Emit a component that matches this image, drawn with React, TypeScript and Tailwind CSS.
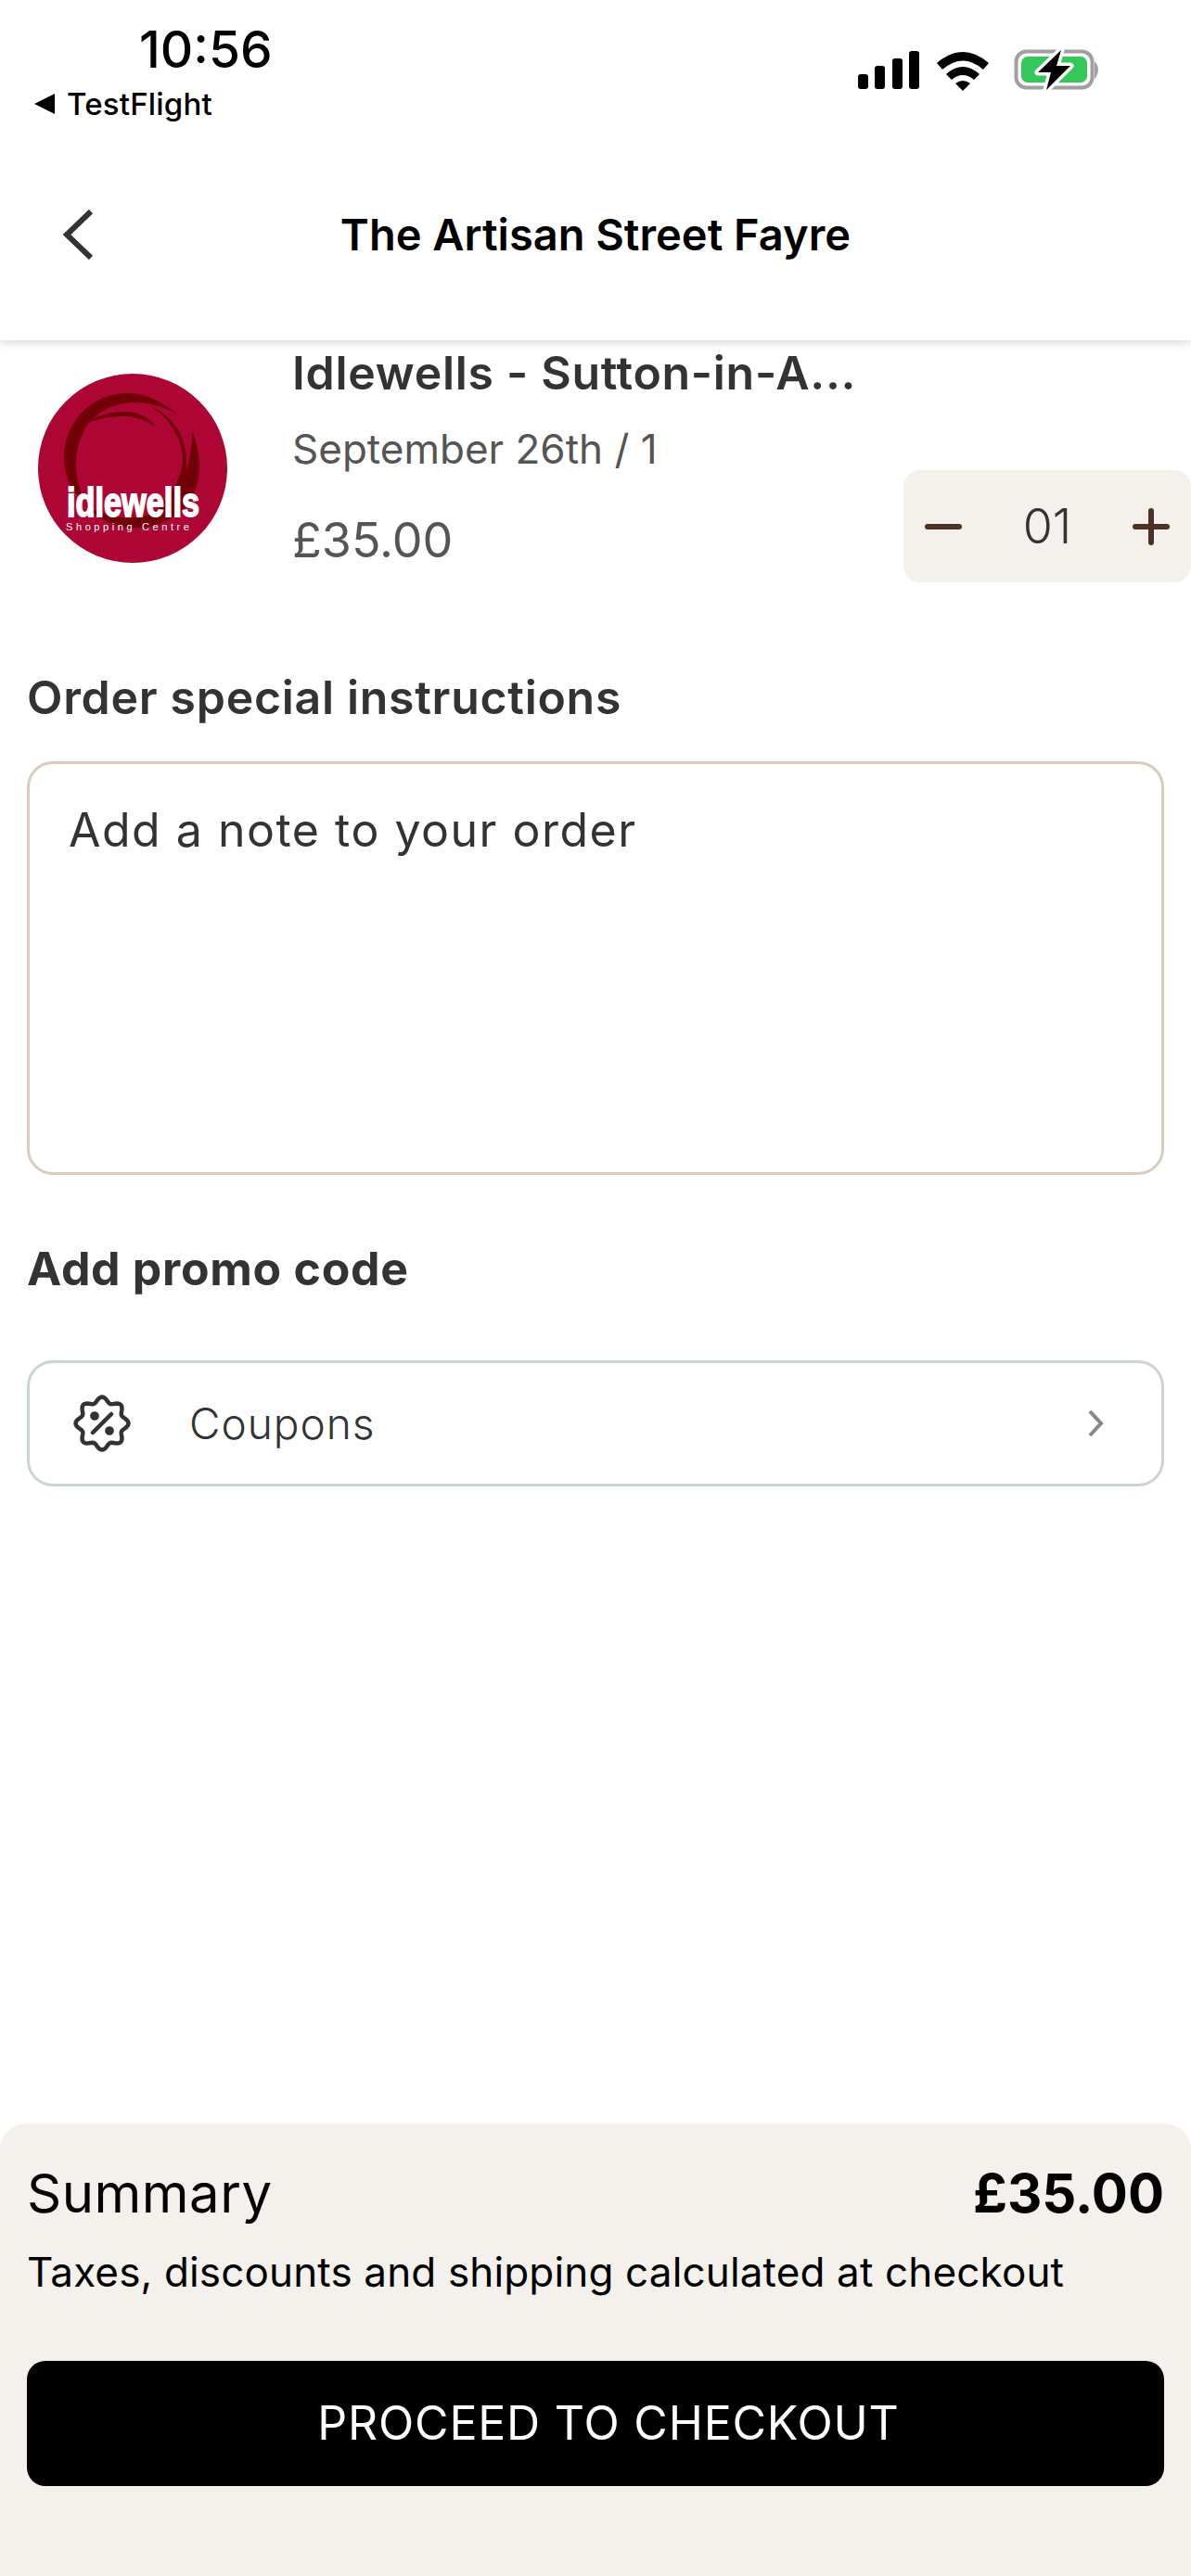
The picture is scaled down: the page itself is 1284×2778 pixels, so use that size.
const inter = { fontFamily: "Inter, 'Liberation Sans', sans-serif" };

// wavy 8 lobe badge outline
const badgePath =
  Array.from({ length: 96 }, (_, i) => {
    const a = (i * 2 * Math.PI) / 96;
    const r = 25.6 + 2.9 * Math.cos(8 * a);
    return `${i === 0 ? "M" : "L"}${(31 + r * Math.cos(a)).toFixed(2)} ${(31 + r * Math.sin(a)).toFixed(2)}`;
  }).join(" ") + " Z";

function StatusIcons() {
  return (
    <svg width="266" height="46" viewBox="0 0 266 46" className="block">
      <rect x="0" y="27" width="11" height="16" rx="3" fill="#000" />
      <rect x="18" y="18" width="11" height="25" rx="3" fill="#000" />
      <rect x="37" y="10" width="11" height="33" rx="3" fill="#000" />
      <rect x="55" y="2" width="11" height="41" rx="3" fill="#000" />
      <path d="M85 15 Q113 -9 141 15 L135 22 Q113 3 91 22 Z" fill="#000" />
      <path d="M95 27 Q113 11 131 27 L125 33 Q113 23 101 33 Z" fill="#000" />
      <path d="M105 37 Q113 31 121 37 L113 45 Z" fill="#000" />
      <rect x="170.5" y="2.5" width="82" height="39" rx="11" fill="none" stroke="#a0a0a0" strokeWidth="4" />
      <rect x="176" y="8" width="71" height="28" rx="7" fill="#34c759" />
      <path d="M256 16 Q260 22 256 29 Z" fill="#a0a0a0" stroke="#a0a0a0" strokeWidth="2" />
      <path d="M219 1 L194 25 H208 L203 44 L229 18 H214 Z" fill="#000" stroke="#fff" strokeWidth="7" paintOrder="stroke" strokeLinejoin="round" />
    </svg>
  );
}

function Logo() {
  return (
    <svg width="204" height="204" viewBox="0 0 204 204" className="block shrink-0">
      <circle cx="102" cy="102" r="102" fill="#ad0534" />
      <path d="M151 44 C130 28 115 21 97 21 C58 21 28 52 28 90 C28 110 35 125 49 137 C45 125 41 112 41 97 C41 80 46 66 54 54 C65 40 85 31 103 31 C120 31 135 35 151 44 Z" fill="#710006" />
      <path d="M52 54 C65 43 82 41 95 41 C108 41 118 46 127 57 C115 50 105 46 95 46 C80 46 65 48 52 54 Z" fill="#710006" />
      <path d="M122 35 C150 48 162 75 160 100 C158 125 145 145 125 150 C140 135 156 115 156 90 C155 70 143 50 122 35 Z" fill="#710006" />
      <path d="M166 62 C174 80 178 105 168 130 C162 142 152 154 130 162 C100 172 70 165 50 140 C70 155 100 160 125 150 C150 135 165 110 166 62 Z" fill="#710006" />
      <g transform="translate(31 154) scale(0.78 1)">
        <text x="0" y="0" fill="#fff" stroke="#fff" strokeWidth="1.8" fontFamily="'Liberation Sans', sans-serif" fontWeight="700" fontSize="44">idlewells</text>
      </g>
      <text x="30" y="169" fill="#fff" fontFamily="'Liberation Sans', sans-serif" fontSize="11" letterSpacing="3.6">Shopping Centre</text>
    </svg>
  );
}

export default function App() {
  return (
    <div className="w-[1284px] h-[2778px] bg-white flex flex-col text-[#333333] overflow-hidden" style={inter}>
      <header className="h-[367px] shrink-0 relative shadow-[0_2px_10px_rgba(0,0,0,0.18)] bg-white">
        <div className="flex justify-between h-[146px]">
          <div className="pl-[36px]">
            <div className="pl-[114px] pt-[22px] text-[55px] leading-[62px] font-medium text-black">10:56</div>
            <div className="flex items-center gap-[12px] mt-[8px] text-[33px] leading-[40px] font-medium text-black tracking-[0.2px]">
              <svg width="24" height="24" viewBox="0 0 24 24"><path d="M23 1 V23 L1 12 Z" fill="#000" /></svg>
              TestFlight
            </div>
          </div>
          <div className="pr-[93px] pt-[53px]">
            <StatusIcons />
          </div>
        </div>
        <div className="flex items-center justify-center h-[122px] relative mt-[46px]">
          <svg className="absolute left-[66px] top-[34px]" width="36" height="54" viewBox="0 0 36 54" fill="none">
            <path d="M32 2 L6 27 L32 52" stroke="#333" strokeWidth="6" />
          </svg>
          <div className="text-[47px] font-semibold text-black">The Artisan Street Fayre</div>
        </div>
      </header>

      <div className="flex-1 flex flex-col">
        <div className="flex pl-[41px] relative">
          <div className="pt-[36px]"><Logo /></div>
          <div className="pl-[70px]">
            <div className="text-[50px] leading-[70px] font-semibold tracking-[0.7px]">Idlewells - Sutton-in-A...</div>
            <div className="text-[44px] leading-[60px] text-[#555555] mt-[17px]">September 26th / 1</div>
            <div className="text-[52px] leading-[70px] text-[#555555] mt-[34px]">£35.00</div>
          </div>
          <div className="absolute right-0 top-[140px] w-[310px] h-[121px] bg-[#f4f0eb] rounded-[18px] flex items-center justify-between pl-[23px] pr-[23px]">
            <svg width="40" height="40" viewBox="0 0 40 40"><path d="M3 20 H37" stroke="#4b3126" strokeWidth="6" strokeLinecap="round" /></svg>
            <span className="text-[52px] text-[#333333] font-light">01</span>
            <svg width="40" height="40" viewBox="0 0 40 40"><path d="M3 20 H37 M20 3 V37" stroke="#4b3126" strokeWidth="6" strokeLinecap="round" /></svg>
          </div>
        </div>

        <div className="px-[29px]">
          <div className="text-[50px] leading-[70px] font-semibold mt-[99px] tracking-[0.7px]">Order special instructions</div>
          <div className="mt-[34px] h-[446px] rounded-[28px] border-[3px] border-[#d8ccbc] pl-[42px] pt-[36px] text-[50px] leading-[70px] tracking-[1.5px]">
            Add a note to your order
          </div>
          <div className="text-[50px] leading-[70px] font-bold mt-[66px] tracking-[0.7px]">Add promo code</div>
          <div className="mt-[64px] h-[136px] rounded-[28px] border-[3px] border-[#c9d5ce] flex items-center pl-[47px] pr-[60px]">
            <svg width="62" height="62" viewBox="0 0 62 62" fill="none" stroke="#333" strokeWidth="4.5" strokeLinecap="round" strokeLinejoin="round">
              <path d={badgePath} />
              <path d="M41 21 L21 41" />
              <circle cx="23" cy="23" r="2.6" fill="#333" />
              <circle cx="39" cy="39" r="2.6" fill="#333" />
            </svg>
            <span className="ml-[63px] text-[46px] tracking-[1px] flex-1 font-light">Coupons</span>
            <svg width="20" height="32" viewBox="0 0 20 32" fill="none"><path d="M3 3 L15 16 L3 29" stroke="#888" strokeWidth="4" /></svg>
          </div>
        </div>
      </div>

      <footer className="h-[488px] shrink-0 bg-[#f4f0eb] rounded-t-[28px] px-[29px] pt-[40px]">
        <div className="flex justify-between items-center h-[70px]">
          <span className="text-[58px] text-black tracking-[0.5px]">Summary</span>
          <span className="text-[58px] font-bold text-black">£35.00</span>
        </div>
        <div className="text-[44px] leading-[60px] text-black mt-[20px] tracking-[0.15px]">Taxes, discounts and shipping calculated at checkout</div>
        <button className="mt-[66px] w-full h-[135px] bg-black rounded-[20px] text-white text-[50px] pl-[28px] tracking-[0.8px]">PROCEED TO CHECKOUT</button>
      </footer>
    </div>
  );
}
